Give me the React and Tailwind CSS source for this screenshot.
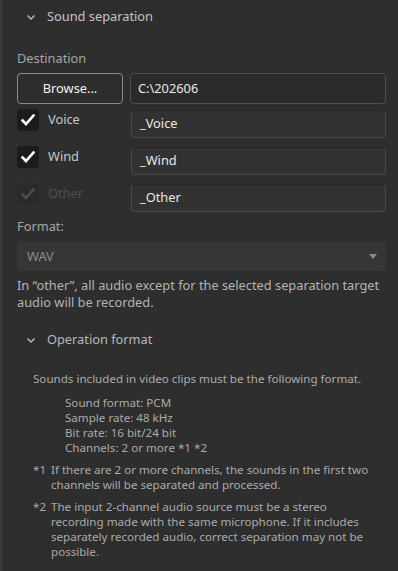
import React from "react";

const Chevron = () => (
  <svg width="10" height="7" viewBox="0 0 10 7" className="shrink-0">
    <path d="M1.5 1.5 L5 5 L8.5 1.5" stroke="#b8b8b8" strokeWidth="1.5" fill="none" />
  </svg>
);

const Check = ({ disabled }) => (
  <div className={`w-[22px] h-[22px] rounded-[3px] flex items-center justify-center ${disabled ? "bg-[#2a2a2a]" : "bg-[#1c1c1c]"}`}>
    <svg width="14" height="12" viewBox="0 0 14 12">
      <path d="M1.5 6.5 L5 10 L12.5 1.5" stroke={disabled ? "#4e4e4e" : "#ffffff"} strokeWidth="2.6" fill="none" strokeLinecap="square" />
    </svg>
  </div>
);

const Row = ({ label, value, disabled }) => (
  <div className="flex items-start">
    <div className="w-[114px] flex items-center gap-[9px] -mt-[1px]">
      <Check disabled={disabled} />
      <span className={`text-[12.8px] ${disabled ? "text-[#4f4f4f]" : "text-[#c4c8d0]"}`}>{label}</span>
    </div>
    <div className="flex-1 h-[28px] rounded-[4px] border border-[#4a4a4a] border-t-[#262626] bg-[#323232] flex items-center px-[8px] text-[12.8px] text-[#e8e8e8]">
      {value}
    </div>
  </div>
);

export default function App() {
  return (
    <div className="w-[398px] h-[571px] bg-[#2e2e2e] flex overflow-hidden" style={{ fontFamily: '"Noto Sans", "Open Sans", sans-serif' }}>
      <div className="w-[2px] bg-[#3a3a3a]" />
      <div className="flex-1 pl-[15px] pr-[12px]">
        <div className="flex items-center gap-[11px] pl-[9px] h-[34px]">
          <Chevron />
          <span className="text-[12.8px] text-[#c4c4c4]">Sound separation</span>
        </div>
        <div className="mt-[14px] text-[12.8px] text-[#a6a6a6] leading-[20px]">Destination</div>
        <div className="mt-[5px] flex gap-[7px]">
          <div className="w-[106px] h-[31px] rounded-[4px] border border-[#8a8a8a] flex items-center justify-center text-[12.8px] text-[#f0f0f0]">Browse...</div>
          <div className="flex-1 h-[31px] rounded-[4px] border border-[#505050] bg-[#2b2b2b] flex items-center px-[7px] text-[12.8px] text-[#e8e8e8]">C:\202606</div>
        </div>
        <div className="mt-[6px] flex flex-col gap-[9px]">
          <Row label="Voice" value="_Voice" />
          <Row label="Wind" value="_Wind" />
          <Row label="Other" value="_Other" disabled />
        </div>
        <div className="mt-[4px] text-[12.8px] text-[#a6a6a6] leading-[20px]">Format:</div>
        <div className="mt-[6px] h-[29px] rounded-[4px] bg-[#363636] flex items-center justify-between pl-[10px] pr-[9px]">
          <span className="text-[12.8px] text-[#8a8a8a]">WAV</span>
          <svg width="8" height="5" viewBox="0 0 8 5"><path d="M0 0 L8 0 L4 5 Z" fill="#8a8a8a" /></svg>
        </div>
        <div className="mt-[6px] text-[12.8px] leading-[17px] text-[#b4b4b4]">
          In “other”, all audio except for the selected separation target audio will be recorded.
        </div>
        <div className="mt-[19px] flex items-center gap-[11px] pl-[9px] h-[20px]">
          <Chevron />
          <span className="text-[12.8px] text-[#b8b8b8]">Operation format</span>
        </div>
        <div className="pl-[16px] pr-[14px] mt-[21px] text-[11.6px] leading-[15px] text-[#ababab]">
          <div>Sounds included in video clips must be the following format.</div>
          <div className="pl-[32px] mt-[9px]">
            <div>Sound format: PCM</div>
            <div>Sample rate: 48 kHz</div>
            <div>Bit rate: 16 bit/24 bit</div>
            <div>Channels: 2 or more *1 *2</div>
          </div>
          <div className="mt-[7px] flex">
            <span className="w-[18px] shrink-0">*1</span>
            <span>If there are 2 or more channels, the sounds in the first two channels will be separated and processed.</span>
          </div>
          <div className="mt-[7px] flex">
            <span className="w-[18px] shrink-0">*2</span>
            <span>The input 2-channel audio source must be a stereo recording made with the same microphone. If it includes separately recorded audio, correct separation may not be possible.</span>
          </div>
        </div>
      </div>
    </div>
  );
}
